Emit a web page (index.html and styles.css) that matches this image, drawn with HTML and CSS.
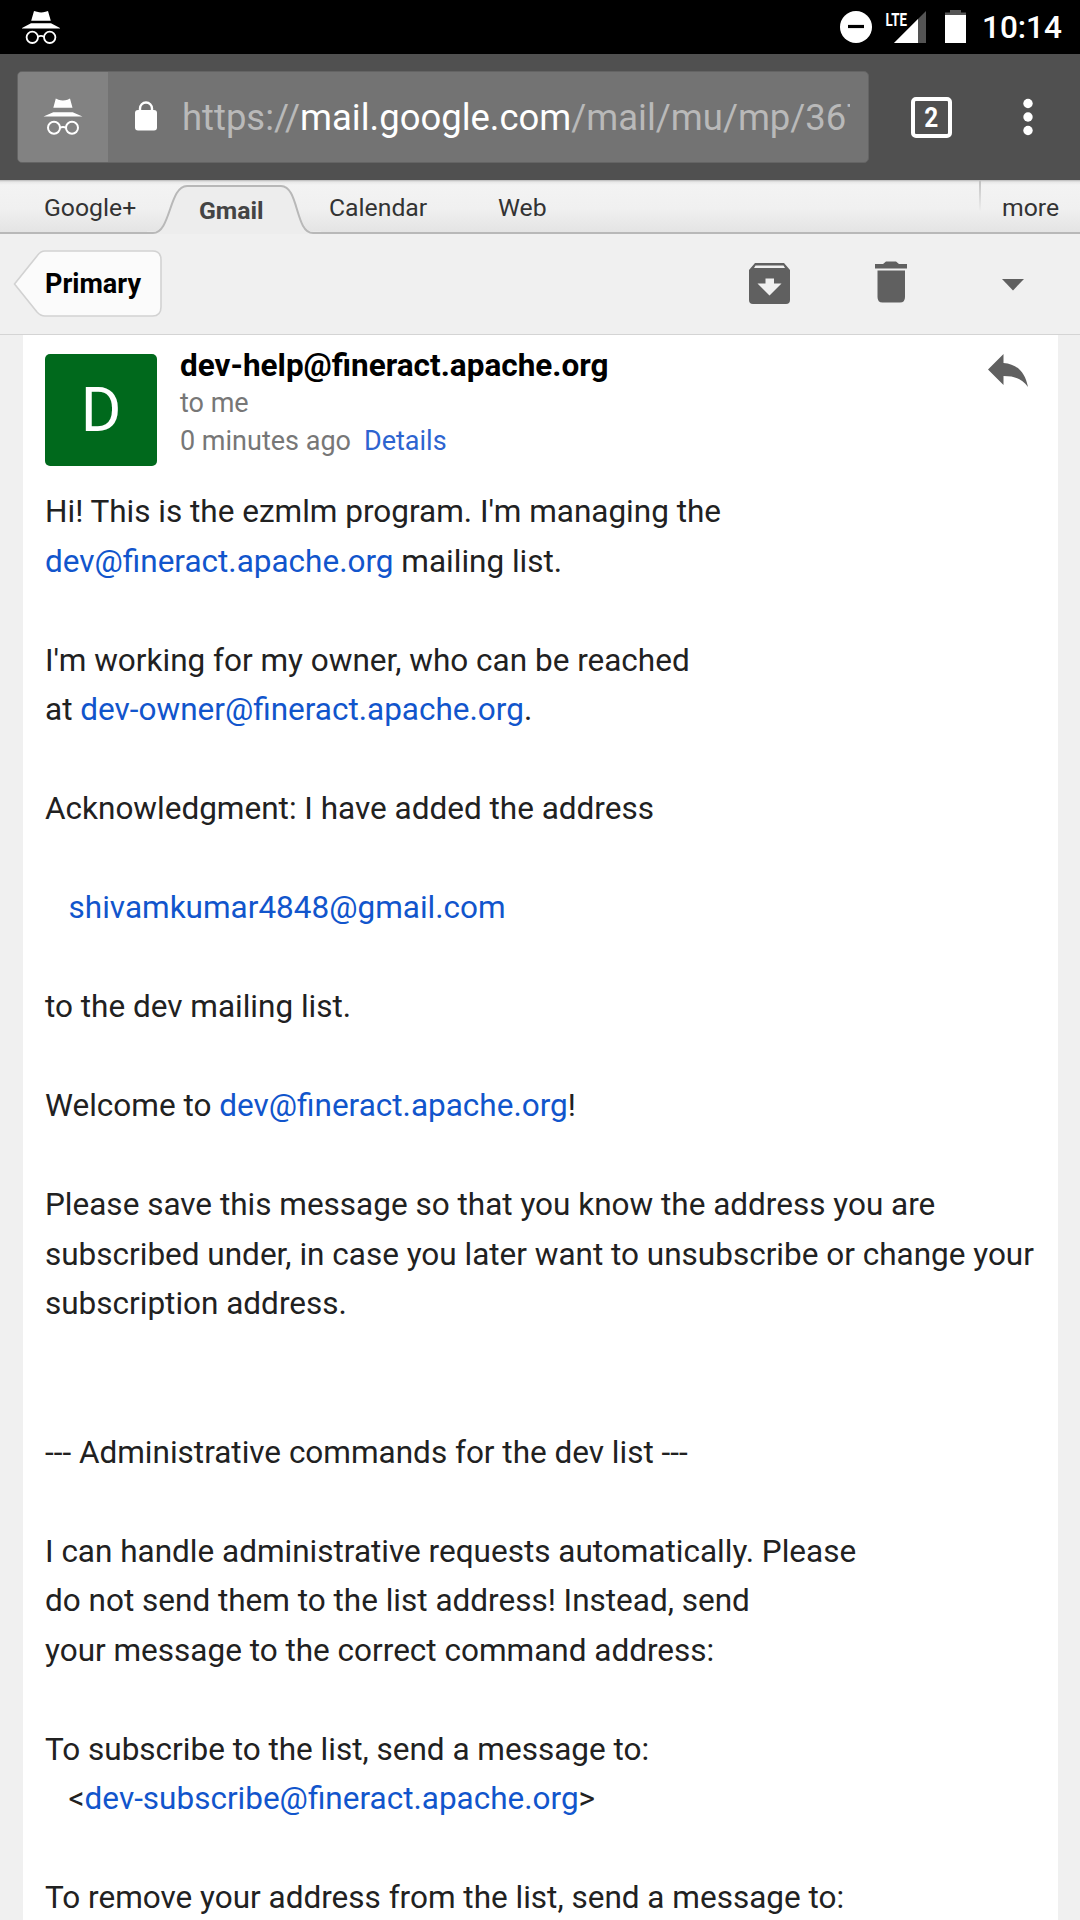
FILE: index.html
```html
<!DOCTYPE html>
<html lang="en">
<head>
<meta charset="utf-8">
<title>Gmail</title>
<link rel="stylesheet" href="styles.css">
</head>
<body>
<div class="status-bar">
  <svg class="status-incognito" viewBox="0 0 38 34" width="38" height="34"><path d="M12 1l3 .8q4 1.2 8.500 0l2.500-.8 2.800 9.700H9.200zM9 13.200h20l9 4.800v.6H0v-.6z" fill="#fff"/><g fill="none" stroke="#fff" stroke-width="1.800"><circle cx="10.300" cy="27.300" r="5.700"/><circle cx="27.700" cy="27.300" r="5.700"/><path d="M16 26.700q3-1.500 6 0"/></g></svg>
  <svg class="status-icons" viewBox="0 0 128 36" width="128" height="36"><circle cx="16" cy="18" r="16" fill="#fff"/><path d="M8 17.500h16" stroke="#000" stroke-width="3.200"/><path d="M54 34L86 2v32z" fill="#545454"/><path d="M54 34L78 10v24z" fill="#fff"/><path d="M105 6.500V3.500h5V1h11v2.500h5v3z" fill="#545454"/><path d="M105 6h21v28h-21z" fill="#fff"/><text class="lte" x="45.500" y="16.500" textLength="21.500" lengthAdjust="spacingAndGlyphs">LTE</text></svg>
  <span class="clock">10:14</span>
</div>
<div class="browser-bar">
  <div class="omnibox">
    <div class="incognito-badge"><svg viewBox="0 0 40 37" width="40" height="37"><path d="M12.800.6l2.700 1.200q4.300 1.400 9 0l2.500-1.200 2.500 9.200H10.300zM10.300 14.200h19.400l9.800 4.300H.5z" fill="#fff"/><g fill="none" stroke="#fff" stroke-width="2"><circle cx="11" cy="29.800" r="6"/><circle cx="29" cy="29.800" r="6"/><path d="M17 29.500q3-1.200 6 0"/></g></svg></div>
    <svg class="lock" viewBox="0 0 24 30" width="24" height="30"><rect x="1" y="9" width="22" height="20.500" rx="3" fill="#fff"/><path d="M6 10V7.500a6 6 0 0 1 12 0V10" fill="none" stroke="#fff" stroke-width="2.400"/></svg>
    <span class="url">https://<b>mail.google.com</b>/mail/mu/mp/367</span>
  </div>
  <svg class="tab-count" viewBox="0 0 41 41" width="41" height="41"><rect x="2" y="2" width="37" height="37" rx="3" fill="none" stroke="#fff" stroke-width="4"/><text x="13.200" y="30" textLength="14" lengthAdjust="spacingAndGlyphs">2</text></svg>
  <svg class="menu" viewBox="0 0 10 38" width="10" height="38"><g fill="#fff"><circle cx="5" cy="5.500" r="4.700"/><circle cx="5" cy="19" r="4.700"/><circle cx="5" cy="32.500" r="4.700"/></g></svg>
</div>
<nav class="google-nav">
  <svg class="tab-shape" viewBox="0 0 174 54" width="174" height="54"><path d="M0 54V51.500H6C24 51.500 22 5 40 5H134C152 5 150 51.500 166 51.500H174V54z" fill="#ededed"/><path d="M0 53H6C24 53 22 6 40 6H134C152 6 148 53 166 53H174" fill="none" stroke="#b8b8b8" stroke-width="2"/></svg>
  <a class="nav-google">Google+</a><a class="nav-gmail">Gmail</a><a class="nav-calendar">Calendar</a><a class="nav-web">Web</a><a class="nav-more">more</a>
</nav>
<div class="toolbar">
  <div class="back"><svg class="back-shape" viewBox="0 0 150 68" width="150" height="68"><path d="M1.500 34L24 6Q27.500 1 32 1H139.500Q148 1 148 10V57Q148 66 139.500 66H32Q27.500 66 24 62Z" fill="#fbfbfb" stroke="#d2d2d2" stroke-width="1.600"/></svg><span class="back-label">Primary</span></div>
  <svg class="archive" viewBox="0 0 41 41" width="41" height="41"><path fill="#606060" fill-rule="evenodd" d="M6 0H35L41 7V37Q41 41 37 41H4Q0 41 0 37V7ZM6.500 2.500L5 5H36L34.500 2.500ZM16.500 15.500V20.500H8.500L20.500 32.500L32.500 20.500H25V15.500Z"/></svg>
  <svg class="trash" viewBox="0 0 32 42" width="32" height="42"><path fill="#606060" d="M0 3H8L11 0.500H21L24 3H32V7.500H0ZM2.500 9.500H30V36Q30 41.500 25 41.500H7.500Q2.500 41.500 2.500 36Z"/></svg>
  <svg class="caret" viewBox="0 0 22 12" width="22" height="12"><path fill="#606060" d="M0 0H22L11 11.500Z"/></svg>
</div>
<main class="message">
  <header class="message-head">
    <div class="avatar">D</div>
    <div class="meta">
      <div class="sender">dev-help@fineract.apache.org</div>
      <div class="recipient">to me</div>
      <div class="date">0 minutes ago<a class="details">Details</a></div>
    </div>
    <svg class="reply" viewBox="0 0 40 33" width="40" height="33"><path fill="#606060" d="M0 15.500L15.500 0V9C29 10 37 18 40 33C34 25 27 22 15.500 22V31Z"/></svg>
  </header>
  <div class="message-body">Hi! This is the ezmlm program. I'm managing the
<a>dev@fineract.apache.org</a> mailing list.

I'm working for my owner, who can be reached
at <a>dev-owner@fineract.apache.org</a>.

Acknowledgment: I have added the address

<span class="indent"></span><a>shivamkumar4848@gmail.com</a>

to the dev mailing list.

Welcome to <a>dev@fineract.apache.org</a>!

Please save this message so that you know the address you are
subscribed under, in case you later want to unsubscribe or change your
subscription address.


--- Administrative commands for the dev list ---

I can handle administrative requests automatically. Please
do not send them to the list address! Instead, send
your message to the correct command address:

To subscribe to the list, send a message to:
<span class="indent"></span>&lt;<a>dev-subscribe@fineract.apache.org</a>&gt;

To remove your address from the list, send a message to:</div>
</main>
</body>
</html>
```
FILE: styles.css
```css
* { box-sizing: border-box; }
body {
  margin: 0;
  width: 1080px;
  height: 1920px;
  overflow: hidden;
  background: #f0f0f0;
  font-family: Roboto, "Noto Sans", sans-serif;
  color: #212121;
  display: flex;
  flex-direction: column;
}
svg { display: block; flex: none; }

.status-bar {
  height: 54px;
  flex: none;
  background: #000;
  display: flex;
  padding-left: 22px;
}
.status-incognito { margin-top: 10px; }
.status-icons { margin: 9px 0 0 780px; }
.lte { font-family: Roboto, sans-serif; font-weight: 700; font-size: 18.500px; fill: #fff; }
.clock {
  margin-left: 14px;
  color: #fff;
  font-size: 31.500px;
  font-weight: 500;
  line-height: 56px;
}

.browser-bar {
  height: 126px;
  flex: none;
  background: #505050;
  display: flex;
  align-items: center;
  padding-left: 17px;
}
.omnibox {
  width: 852px;
  height: 92px;
  background: #737373;
  border: 1px solid #646464;
  border-radius: 5px;
  display: flex;
  align-items: center;
  overflow: hidden;
}
.incognito-badge {
  width: 90px;
  height: 100%;
  background: #828282;
  display: flex;
  align-items: center;
  justify-content: center;
}
.incognito-badge svg { margin-top: -2px; }
.lock { margin: -3px 0 0 26px; }
.url {
  margin-left: 24px;
  width: 668px;
  overflow: hidden;
  white-space: nowrap;
  font-size: 36.450px;
  color: #b9b9b9;
}
.url b { font-weight: 400; color: #fff; }
.tab-count { margin-left: 41.500px; }
.tab-count text { font-family: Roboto, sans-serif; font-weight: 700; font-size: 27px; fill: #fff; }
.menu { margin-left: 71.500px; }

.google-nav {
  position: relative;
  height: 54px;
  flex: none;
  display: flex;
  background: linear-gradient(#b8b8b8, #e8e8e8 2px, #f3f3f3 5px, #f0f0f0 55%, #e4e4e4);
  border-bottom: 2px solid #b8b8b8;
  font-size: 24.750px;
  line-height: 30px;
  padding-top: 13px;
  color: #333;
}
.google-nav a { position: relative; }
.tab-shape { position: absolute; left: 147px; top: 0; }
.nav-google { margin-left: 44px; width: 155px; }
.nav-gmail { width: 130px; padding-top: 3px; font-weight: 700; color: #444; }
.nav-calendar { width: 169px; }
.nav-web { width: 481px; }
.nav-more {
  margin-top: -13px;
  padding: 13px 0 0 23px;
  background: linear-gradient(#c0c0c0, #f0f0f0) 0 0 / 2px 32px no-repeat;
}

.toolbar {
  height: 101px;
  flex: none;
  border-bottom: 1px solid #d4d4d4;
  display: flex;
  align-items: flex-start;
}
.back { position: relative; width: 749px; height: 100px; }
.back-shape { position: absolute; left: 13px; top: 16px; }
.back-label {
  position: relative;
  display: block;
  padding: 33px 0 0 45px;
  font-size: 27px;
  line-height: 34px;
  font-weight: 700;
  color: #000;
}
.archive { margin-top: 29px; }
.trash { margin: 27px 0 0 85px; }
.caret { margin: 45px 0 0 95px; }

.message {
  flex: none;
  width: 1035px;
  height: 1585px;
  margin-left: 22.500px;
  background: #fff;
  padding: 18px 22.500px 0;
  overflow: hidden;
}
.message-head { display: flex; height: 134px; }
.avatar {
  width: 112px;
  height: 112px;
  margin: 0.500px 0.500px 0 0;
  border-radius: 5px;
  background: #00691c;
  color: #fff;
  font-size: 62px;
  line-height: 111px;
  text-align: center;
}
.meta { width: 808px; margin-left: 22.500px; margin-top: -6px; color: #777; font-size: 27px; line-height: 38px; }
.sender { height: 37px; font-size: 31.500px; font-weight: 700; color: #000; }
.details { margin-left: 13px; color: #2d64d0; }
.reply { margin-top: 1px; }
.message-body {
  white-space: pre;
  font-size: 31.500px;
  line-height: 49.500px;
}
.message-body a { color: #15c; }
.indent { display: inline-block; width: 23.600px; }
```
